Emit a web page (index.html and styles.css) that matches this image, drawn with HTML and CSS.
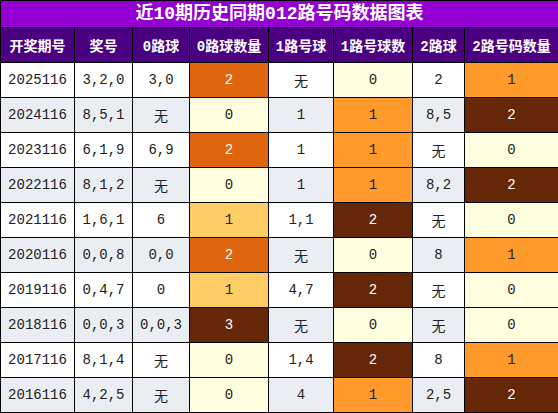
FILE: index.html
```html
<!DOCTYPE html>
<html lang="zh">
<head>
<meta charset="utf-8">
<link rel="stylesheet" href="styles.css">
</head>
<body>
<table class="chart">
  <colgroup>
    <col class="c1"><col class="c2"><col class="c3"><col class="c4"><col class="c5"><col class="c6"><col class="c7"><col class="c8">
  </colgroup>
  <thead>
    <tr class="title"><th colspan="8">近10期历史同期012路号码数据图表</th></tr>
    <tr class="head">
      <th>开奖期号</th><th>奖号</th><th>0路球</th><th>0路球数量</th><th>1路号球</th><th>1路号球数</th><th>2路球</th><th>2路号码数量</th>
    </tr>
  </thead>
  <tbody>
    <tr><td>2025116</td><td>3,2,0</td><td>3,0</td><td class="k2">2</td><td>无</td><td class="k0">0</td><td>2</td><td class="k1">1</td></tr>
    <tr class="alt"><td>2024116</td><td>8,5,1</td><td>无</td><td class="k0">0</td><td>1</td><td class="k1">1</td><td>8,5</td><td class="kb">2</td></tr>
    <tr><td>2023116</td><td>6,1,9</td><td>6,9</td><td class="k2">2</td><td>1</td><td class="k1">1</td><td>无</td><td class="k0">0</td></tr>
    <tr class="alt"><td>2022116</td><td>8,1,2</td><td>无</td><td class="k0">0</td><td>1</td><td class="k1">1</td><td>8,2</td><td class="kb">2</td></tr>
    <tr><td>2021116</td><td>1,6,1</td><td>6</td><td class="kg">1</td><td>1,1</td><td class="kb">2</td><td>无</td><td class="k0">0</td></tr>
    <tr class="alt"><td>2020116</td><td>0,0,8</td><td>0,0</td><td class="k2">2</td><td>无</td><td class="k0">0</td><td>8</td><td class="k1">1</td></tr>
    <tr><td>2019116</td><td>0,4,7</td><td>0</td><td class="kg">1</td><td>4,7</td><td class="kb">2</td><td>无</td><td class="k0">0</td></tr>
    <tr class="alt"><td>2018116</td><td>0,0,3</td><td>0,0,3</td><td class="kb">3</td><td>无</td><td class="k0">0</td><td>无</td><td class="k0">0</td></tr>
    <tr><td>2017116</td><td>8,1,4</td><td>无</td><td class="k0">0</td><td>1,4</td><td class="kb">2</td><td>8</td><td class="k1">1</td></tr>
    <tr class="alt"><td>2016116</td><td>4,2,5</td><td>无</td><td class="k0">0</td><td>4</td><td class="k1">1</td><td>2,5</td><td class="kb">2</td></tr>
  </tbody>
</table>
</body>
</html>
```

FILE: styles.css
```css
html, body {
  margin: 0;
  padding: 0;
  background: #ffffff;
}

.chart {
  width: 558px;
  table-layout: fixed;
  border-collapse: collapse;
  font-family: "Liberation Mono", "Noto Sans CJK SC", monospace;
  font-size: 14px;
  color: #222222;
}

.c1 { width: 74px; }
.c2 { width: 58px; }
.c3 { width: 57px; }
.c4 { width: 79px; }
.c5 { width: 65px; }
.c6 { width: 79px; }
.c7 { width: 52px; }
.c8 { width: 94px; }

.chart th,
.chart td {
  border: 1px solid #000000;
  padding: 0;
  text-align: center;
  vertical-align: middle;
  overflow: hidden;
  white-space: nowrap;
}

.title th {
  height: 26px;
  background: #9400d3;
  color: #ffffff;
  font-size: 18px;
  font-weight: bold;
  line-height: 26px;
}

.head th {
  height: 34px;
  background: #4b0082;
  color: #ffffff;
  font-size: 14px;
  font-weight: bold;
}

.chart td {
  height: 34px;
  background: #ffffff;
}

.chart tr.alt td {
  background: #eaeef2;
}

.chart td.k0,
.chart tr.alt td.k0 { background: #ffffe0; color: #222222; }
.chart td.k1,
.chart tr.alt td.k1 { background: #ff9a2b; color: #222222; }
.chart td.k2,
.chart tr.alt td.k2 { background: #e0650f; color: #ffffff; }
.chart td.kb,
.chart tr.alt td.kb { background: #662608; color: #ffffff; }
.chart td.kg,
.chart tr.alt td.kg { background: #ffcc66; color: #222222; }
```
